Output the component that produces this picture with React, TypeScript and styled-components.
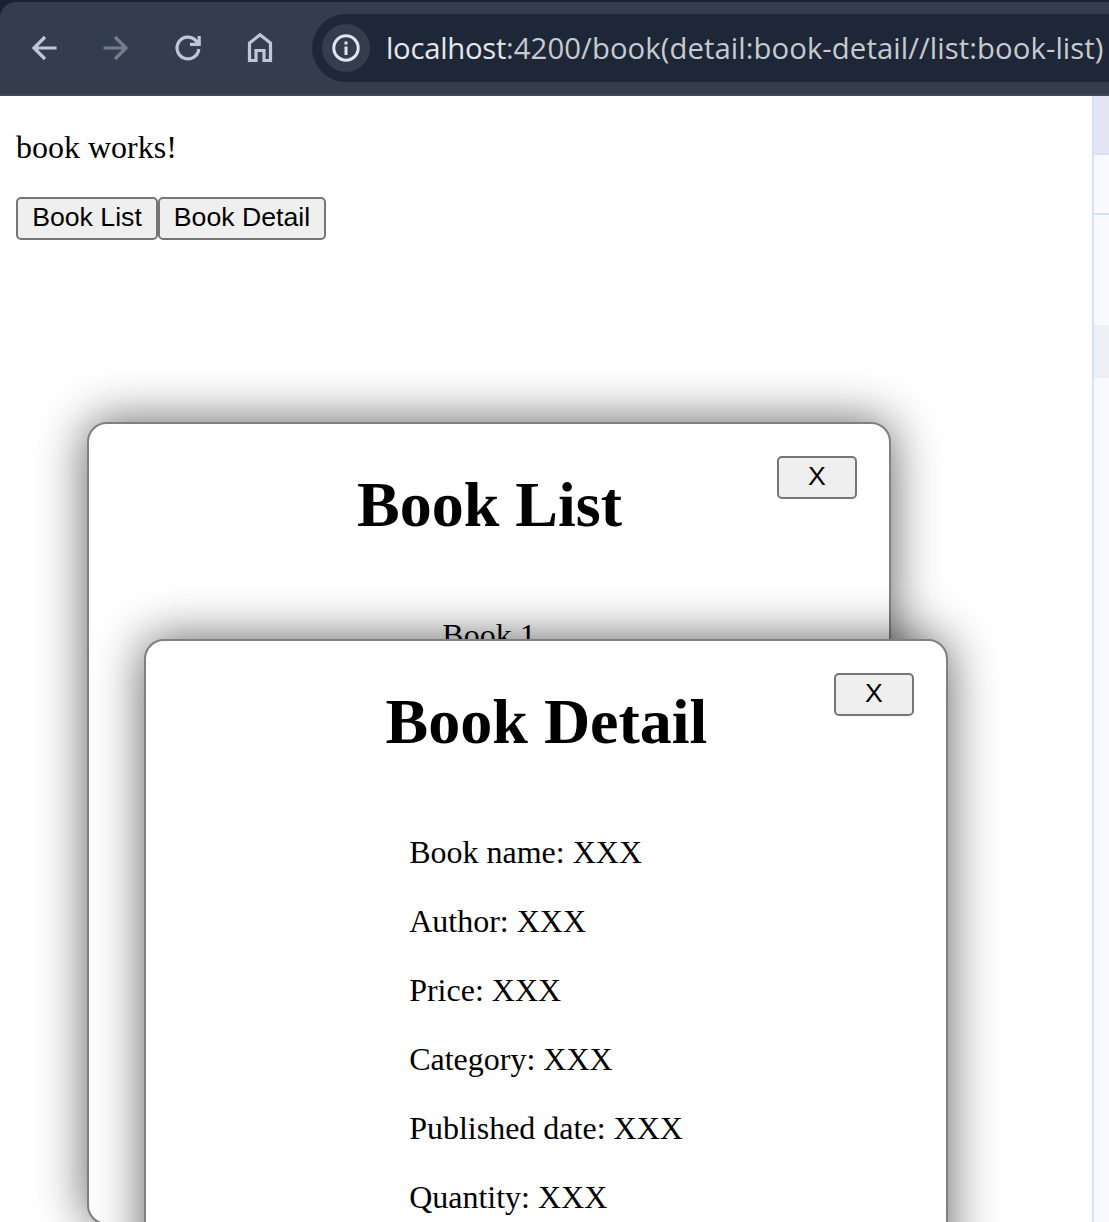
import React from "react";
import styled, { createGlobalStyle } from "styled-components";

const Global = createGlobalStyle`
  * { box-sizing: border-box; }
  body { margin: 0; background: #fff; overflow: hidden; }
`;

const Screen = styled.div`
  width: 1109px;
  height: 1222px;
  display: flex;
  flex-direction: column;
  overflow: hidden;
  background: #182230;
  font-family: "Liberation Serif", "Times New Roman", serif;
  font-size: 32px;
  color: #000;
`;

const Toolbar = styled.header`
  flex: none;
  height: 94px;
  margin-top: 2px;
  padding-left: 24px;
  display: flex;
  align-items: center;
  background: #343d4e;
  border-top-left-radius: 16px;
  border-bottom: 2px solid #46484c;
`;

const NavButton = styled.span<{ $muted?: boolean }>`
  width: 40px;
  height: 40px;
  margin-right: 32px;
  color: ${(p) => (p.$muted ? "#767c8a" : "#bec6dc")};

  svg {
    display: block;
    width: 40px;
    height: 40px;
    fill: none;
    stroke: currentColor;
    stroke-width: 3.2;
  }
`;

const AddressBar = styled.div`
  flex: 1;
  height: 68px;
  padding-left: 10px;
  display: flex;
  align-items: center;
  background: #1e2737;
  border-radius: 34px 0 0 34px;
  white-space: nowrap;
`;

const SiteInfo = styled.span`
  flex: none;
  width: 48px;
  height: 48px;
  margin-right: 16px;
  display: grid;
  place-items: center;
  border-radius: 50%;
  background: #343d4e;
`;

const Url = styled.span`
  padding-bottom: 1px;
  font-family: "Open Sans", "Noto Sans", sans-serif;
  font-size: 29.3px;
  letter-spacing: 0.07px;
  color: #c7cad0;
`;

const Host = styled.span`
  letter-spacing: -0.3px;
  color: #e4e6ee;
`;

const Viewport = styled.div`
  flex: 1;
  display: flex;
  min-height: 0;
`;

const Page = styled.main`
  position: relative;
  flex: 1;
  padding: 33px 16px;
  background: #fff;
  overflow: hidden;
`;

const Status = styled.p`
  margin: 0 0 31px;
  line-height: 37px;
`;

const ButtonRow = styled.div`
  display: flex;
`;

const Button = styled.button<{ $width: number }>`
  width: ${(p) => p.$width}px;
  height: 43px;
  padding: 0 0 4px;
  border: 2px solid #767676;
  border-radius: 5px;
  background: #efefef;
  color: #000;
  font-family: "Liberation Sans", Arial, sans-serif;
  font-size: 26.667px;
  line-height: 30px;
  white-space: nowrap;
`;

const Dialog = styled.section<{ $left: number; $top: number }>`
  position: absolute;
  left: ${(p) => p.$left}px;
  top: ${(p) => p.$top}px;
  width: 804px;
  height: 803px;
  padding-top: 44px;
  display: flex;
  flex-direction: column;
  align-items: center;
  border: 2px solid #808080;
  border-radius: 20px;
  background: #fff;
  box-shadow: 0 0 50px rgba(0, 0, 0, 0.63);
`;

const CloseSlot = styled.div`
  position: absolute;
  top: 32px;
  right: 32px;
  display: flex;
`;

const Title = styled.h1`
  margin: 0 0 75px;
  padding-left: 1px;
  font-size: 64px;
  line-height: 74px;
  font-weight: 700;
`;

const Field = styled.p`
  margin: 0 0 32px;
  line-height: 37px;
`;

const DevTools = styled.aside`
  flex: none;
  width: 17px;
  display: flex;
  flex-direction: column;
  border-left: 2px solid #d3e1fd;
  background: #faf9fe;
`;

const Band = styled.div<{ $height: number; $fill: string; $ruled?: boolean }>`
  height: ${(p) => p.$height}px;
  background: ${(p) => p.$fill};
  border-bottom: ${(p) => (p.$ruled ? "2px solid #d3e1fd" : "none")};
`;

const fields = ["Book name", "Author", "Price", "Category", "Published date", "Quantity"];

export default function App() {
  return (
    <Screen>
      <Global />
      <Toolbar>
        <NavButton>
          <svg viewBox="0 0 40 40"><path d="M32.500 20H10M21 9L10 20l11 11" /></svg>
        </NavButton>
        <NavButton $muted>
          <svg viewBox="0 0 40 40"><path d="M7.500 20H30M19 9l11 11-11 11" /></svg>
        </NavButton>
        <NavButton>
          <svg viewBox="0 0 40 40">
            <path d="M30.800 21A10.900 10.900 0 1 1 27.700 12.300L31 15.800M31.200 8v8.300H22" />
            <path d="M26 16l5-4v4z" fill="currentColor" strokeWidth="1" />
          </svg>
        </NavButton>
        <NavButton>
          <svg viewBox="0 0 40 40">
            <path d="M9.500 15L20 6.800 30.500 15V32.500H24V22.500h-8v10H9.500z" />
          </svg>
        </NavButton>
        <AddressBar>
          <SiteInfo>
            <svg width="28" height="28" viewBox="0 0 28 28" fill="none">
              <circle cx="14" cy="14" r="12.200" stroke="#e3e5ed" strokeWidth="3" />
              <path d="M14 12.500v8.500M14 7.500v3" stroke="#e3e5ed" strokeWidth="3" />
            </svg>
          </SiteInfo>
          <Url><Host>localhost</Host>:4200/book(detail:book-detail//list:book-list)</Url>
        </AddressBar>
      </Toolbar>
      <Viewport>
        <Page>
          <Status>book works!</Status>
          <ButtonRow>
            <Button $width={142}>Book List</Button>
            <Button $width={168}>Book Detail</Button>
          </ButtonRow>
          <Dialog $left={87} $top={326}>
            <CloseSlot><Button $width={80}>X</Button></CloseSlot>
            <Title>Book List</Title>
            <Field>Book 1</Field>
          </Dialog>
          <Dialog $left={144} $top={543}>
            <CloseSlot><Button $width={80}>X</Button></CloseSlot>
            <Title>Book Detail</Title>
            <div>
              {fields.map((name) => <Field key={name}>{name}: XXX</Field>)}
            </div>
          </Dialog>
        </Page>
        <DevTools>
          <Band $height={59} $fill="#e4e7f3" $ruled />
          <Band $height={60} $fill="#faf9fe" $ruled />
          <Band $height={110} $fill="#faf9fe" />
          <Band $height={53} $fill="#eff0f5" />
        </DevTools>
      </Viewport>
    </Screen>
  );
}
